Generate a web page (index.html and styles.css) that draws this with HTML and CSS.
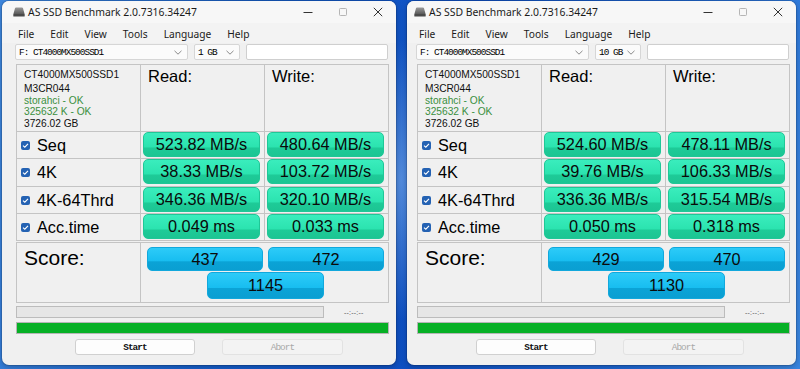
FILE: index.html
```html
<!DOCTYPE html>
<html>
<head>
<meta charset="utf-8">
<title>AS SSD Benchmark</title>
<link rel="stylesheet" href="styles.css">
</head>
<body>
<div class="desktop">

  <div class="win win-a">
    <div class="titlebar">
      <svg class="appicon" viewBox="0 0 12 10" width="12" height="10"><defs><linearGradient id="hdA" x1="0" y1="0" x2="0" y2="1"><stop offset="0" stop-color="#9a9a9a"/><stop offset="1" stop-color="#5a5a5a"/></linearGradient></defs><path d="M3 0.5 H9 Q9.8 0.5 10 1.3 L11.6 7 H0.4 L2 1.3 Q2.2 0.5 3 0.5 Z" fill="url(#hdA)"/><rect x="0.3" y="7" width="11.4" height="2.6" rx="0.6" fill="#4a4a4a"/></svg>
      <span class="title">AS SSD Benchmark 2.0.7316.34247</span>
      <div class="controls">
        <span class="ctl"><svg width="10" height="10" viewBox="0 0 10 10"><path d="M0.5 5.5 H9.5" stroke="#333" stroke-width="1"/></svg></span>
        <span class="ctl"><svg width="10" height="10" viewBox="0 0 10 10"><rect x="1.5" y="1.5" width="7" height="7" rx="0.8" fill="none" stroke="#b5b5b5" stroke-width="1"/></svg></span>
        <span class="ctl"><svg width="10" height="10" viewBox="0 0 10 10"><path d="M0.8 0.8 L9.2 9.2 M9.2 0.8 L0.8 9.2" stroke="#333" stroke-width="1"/></svg></span>
      </div>
    </div>
    <div class="menubar"><span class="mi">File</span><span class="mi">Edit</span><span class="mi">View</span><span class="mi">Tools</span><span class="mi">Language</span><span class="mi">Help</span></div>
    <div class="content">
      <div class="selectors">
        <div class="combo drive"><span>F: CT4000MX500SSD1</span><svg class="chev" width="8" height="5" viewBox="0 0 8 5"><path d="M0.5 0.8 L4 4.2 L7.5 0.8" fill="none" stroke="#8a8a8a" stroke-width="1"/></svg></div>
        <div class="combo size"><span>1 GB</span><svg class="chev" width="8" height="5" viewBox="0 0 8 5"><path d="M0.5 0.8 L4 4.2 L7.5 0.8" fill="none" stroke="#8a8a8a" stroke-width="1"/></svg></div>
        <div class="textbox"></div>
      </div>
      <div class="results">
        <div class="cell info">
          <div class="l1">CT4000MX500SSD1</div>
          <div>M3CR044</div>
          <div class="ok">storahci - OK</div>
          <div class="ok">325632 K - OK</div>
          <div>3726.02 GB</div>
        </div>
        <div class="cell head">Read:</div>
        <div class="cell head">Write:</div>

        <div class="cell label"><span class="check"><svg width="9" height="9" viewBox="0 0 9 9"><path d="M2 4.6 L3.8 6.2 L7 2.9" fill="none" stroke="#fff" stroke-width="1.1"/></svg></span>Seq</div>
        <div class="cell val"><div class="pill">523.82 MB/s</div></div>
        <div class="cell val"><div class="pill">480.64 MB/s</div></div>

        <div class="cell label"><span class="check"><svg width="9" height="9" viewBox="0 0 9 9"><path d="M2 4.6 L3.8 6.2 L7 2.9" fill="none" stroke="#fff" stroke-width="1.1"/></svg></span>4K</div>
        <div class="cell val"><div class="pill">38.33 MB/s</div></div>
        <div class="cell val"><div class="pill">103.72 MB/s</div></div>

        <div class="cell label"><span class="check"><svg width="9" height="9" viewBox="0 0 9 9"><path d="M2 4.6 L3.8 6.2 L7 2.9" fill="none" stroke="#fff" stroke-width="1.1"/></svg></span>4K-64Thrd</div>
        <div class="cell val"><div class="pill">346.36 MB/s</div></div>
        <div class="cell val"><div class="pill">320.10 MB/s</div></div>

        <div class="cell label"><span class="check"><svg width="9" height="9" viewBox="0 0 9 9"><path d="M2 4.6 L3.8 6.2 L7 2.9" fill="none" stroke="#fff" stroke-width="1.1"/></svg></span>Acc.time</div>
        <div class="cell val"><div class="pill">0.049 ms</div></div>
        <div class="cell val"><div class="pill">0.033 ms</div></div>
      </div>
      <div class="score">
        <div class="cell score-label">Score:</div>
        <div class="cell score-vals">
          <div class="srow"><div class="spill">437</div><div class="spill">472</div></div>
          <div class="srow total"><div class="spill big">1145</div></div>
        </div>
      </div>
      <div class="progress-row"><div class="progress"></div><span class="time">--:--:--</span></div>
      <div class="greenbar"></div>
      <div class="buttons"><div class="btn">Start</div><div class="btn disabled">Abort</div></div>
    </div>
  </div>

  <div class="win win-b">
    <div class="titlebar">
      <svg class="appicon" viewBox="0 0 12 10" width="12" height="10"><defs><linearGradient id="hdB" x1="0" y1="0" x2="0" y2="1"><stop offset="0" stop-color="#9a9a9a"/><stop offset="1" stop-color="#5a5a5a"/></linearGradient></defs><path d="M3 0.5 H9 Q9.8 0.5 10 1.3 L11.6 7 H0.4 L2 1.3 Q2.2 0.5 3 0.5 Z" fill="url(#hdB)"/><rect x="0.3" y="7" width="11.4" height="2.6" rx="0.6" fill="#4a4a4a"/></svg>
      <span class="title">AS SSD Benchmark 2.0.7316.34247</span>
      <div class="controls">
        <span class="ctl"><svg width="10" height="10" viewBox="0 0 10 10"><path d="M0.5 5.5 H9.5" stroke="#333" stroke-width="1"/></svg></span>
        <span class="ctl"><svg width="10" height="10" viewBox="0 0 10 10"><rect x="1.5" y="1.5" width="7" height="7" rx="0.8" fill="none" stroke="#b5b5b5" stroke-width="1"/></svg></span>
        <span class="ctl"><svg width="10" height="10" viewBox="0 0 10 10"><path d="M0.8 0.8 L9.2 9.2 M9.2 0.8 L0.8 9.2" stroke="#333" stroke-width="1"/></svg></span>
      </div>
    </div>
    <div class="menubar"><span class="mi">File</span><span class="mi">Edit</span><span class="mi">View</span><span class="mi">Tools</span><span class="mi">Language</span><span class="mi">Help</span></div>
    <div class="content">
      <div class="selectors">
        <div class="combo drive"><span>F: CT4000MX500SSD1</span><svg class="chev" width="8" height="5" viewBox="0 0 8 5"><path d="M0.5 0.8 L4 4.2 L7.5 0.8" fill="none" stroke="#8a8a8a" stroke-width="1"/></svg></div>
        <div class="combo size"><span>10 GB</span><svg class="chev" width="8" height="5" viewBox="0 0 8 5"><path d="M0.5 0.8 L4 4.2 L7.5 0.8" fill="none" stroke="#8a8a8a" stroke-width="1"/></svg></div>
        <div class="textbox"></div>
      </div>
      <div class="results">
        <div class="cell info">
          <div class="l1">CT4000MX500SSD1</div>
          <div>M3CR044</div>
          <div class="ok">storahci - OK</div>
          <div class="ok">325632 K - OK</div>
          <div>3726.02 GB</div>
        </div>
        <div class="cell head">Read:</div>
        <div class="cell head">Write:</div>

        <div class="cell label"><span class="check"><svg width="9" height="9" viewBox="0 0 9 9"><path d="M2 4.6 L3.8 6.2 L7 2.9" fill="none" stroke="#fff" stroke-width="1.1"/></svg></span>Seq</div>
        <div class="cell val"><div class="pill">524.60 MB/s</div></div>
        <div class="cell val"><div class="pill">478.11 MB/s</div></div>

        <div class="cell label"><span class="check"><svg width="9" height="9" viewBox="0 0 9 9"><path d="M2 4.6 L3.8 6.2 L7 2.9" fill="none" stroke="#fff" stroke-width="1.1"/></svg></span>4K</div>
        <div class="cell val"><div class="pill">39.76 MB/s</div></div>
        <div class="cell val"><div class="pill">106.33 MB/s</div></div>

        <div class="cell label"><span class="check"><svg width="9" height="9" viewBox="0 0 9 9"><path d="M2 4.6 L3.8 6.2 L7 2.9" fill="none" stroke="#fff" stroke-width="1.1"/></svg></span>4K-64Thrd</div>
        <div class="cell val"><div class="pill">336.36 MB/s</div></div>
        <div class="cell val"><div class="pill">315.54 MB/s</div></div>

        <div class="cell label"><span class="check"><svg width="9" height="9" viewBox="0 0 9 9"><path d="M2 4.6 L3.8 6.2 L7 2.9" fill="none" stroke="#fff" stroke-width="1.1"/></svg></span>Acc.time</div>
        <div class="cell val"><div class="pill">0.050 ms</div></div>
        <div class="cell val"><div class="pill">0.318 ms</div></div>
      </div>
      <div class="score">
        <div class="cell score-label">Score:</div>
        <div class="cell score-vals">
          <div class="srow"><div class="spill">429</div><div class="spill">470</div></div>
          <div class="srow total"><div class="spill big">1130</div></div>
        </div>
      </div>
      <div class="progress-row"><div class="progress"></div><span class="time">--:--:--</span></div>
      <div class="greenbar"></div>
      <div class="buttons"><div class="btn">Start</div><div class="btn disabled">Abort</div></div>
    </div>
  </div>

</div>
</body>
</html>
```

FILE: styles.css
```css
html, body {
  margin: 0;
  padding: 0;
}

body {
  width: 800px;
  height: 369px;
  overflow: hidden;
  background:
    radial-gradient(ellipse 60px 200px at 401px 180px, rgba(140, 190, 245, 0.55), rgba(140, 190, 245, 0) 70%),
    linear-gradient(100deg, #3f88df 0%, #165fcb 30%, #0e4fc2 55%, #1f68d4 80%, #3a86e0 100%);
}

.desktop {
  display: flex;
  gap: 11px;
  padding: 1px 0 0 2px;
  box-sizing: border-box;
  height: 369px;
}

.win {
  height: 364px;
  background: #f0f0f0;
  border-radius: 7px;
  overflow: hidden;
  box-shadow: 0 0 0 1px rgba(0, 0, 0, 0.12), 0 2px 6px rgba(0, 0, 0, 0.25);
  display: flex;
  flex-direction: column;
}

.win-a { width: 394px; --pad: 13px; }
.win-b { width: 389px; --pad: 9px; }

/* Title bar */
.titlebar {
  height: 22px;
  flex: none;
  display: flex;
  align-items: center;
  background: #f7f7f7;
  padding-left: calc(var(--pad) - 2px);
}

.appicon {
  display: block;
  flex: none;
}

.title {
  margin-left: 3px;
  font-family: "Noto Sans", "Open Sans", sans-serif;
  font-size: 10.4px;
  color: #1b1b1b;
  white-space: nowrap;
}

.controls {
  margin-left: auto;
  margin-right: 1px;
  display: flex;
}

.ctl {
  width: 35px;
  height: 22px;
  display: flex;
  align-items: center;
  justify-content: center;
}

.ctl svg { display: block; }

/* Menu */
.menubar {
  height: 20px;
  flex: none;
  display: flex;
  align-items: center;
  padding-left: calc(var(--pad) - 5px);
  padding-top: 1px;
  box-sizing: border-box;
  background: #f3f3f3;
  font-family: "Noto Sans", "Open Sans", sans-serif;
  font-size: 10.2px;
  color: #1b1b1b;
}

.mi { padding: 0 8px; }

/* Content */
.content {
  padding-left: var(--pad);
}

.selectors {
  display: flex;
  gap: 6px;
  height: 16px;
  margin-top: 1px;
}

.combo {
  box-sizing: border-box;
  height: 16px;
  background: #fbfbfb;
  border: 1px solid #d6d6d6;
  border-radius: 2px;
  display: flex;
  align-items: center;
  justify-content: space-between;
  padding: 0 5px 0 3px;
  font-family: "Liberation Mono", monospace;
  font-size: 9.4px;
  letter-spacing: -0.95px;
  color: #000;
  white-space: nowrap;
}

.combo .chev { display: block; flex: none; }

.drive { width: 173px; }
.size { width: 46px; }

.textbox {
  box-sizing: border-box;
  width: 142px;
  height: 16px;
  background: #fff;
  border: 1px solid #cfcfcf;
  border-radius: 2px;
}

/* Result grid */
.results {
  margin-top: 4px;
  margin-left: 1px;
  display: grid;
  grid-template-columns: 123px 123px 123px;
  grid-template-rows: 66px 26px 27px 26px 26px;
  gap: 1px;
  padding: 1px;
  background: #c4c4c4;
  width: max-content;
}

.cell {
  background: #f0f0f0;
  font-family: "Liberation Sans", Arial, sans-serif;
  color: #000;
}

.info {
  padding: 4px 0 0 7px;
  font-size: 10.2px;
  line-height: 11.8px;
  color: #111;
}

.info .l1 { margin-bottom: 2px; }
.info .ok { color: #3b8f3e; }

.head {
  padding: 3px 0 0 7px;
  font-size: 16.5px;
  line-height: 16px;
}

.label {
  display: flex;
  align-items: center;
  font-size: 16.3px;
  padding-left: 4px;
}

.check {
  width: 9px;
  height: 9px;
  border-radius: 2px;
  background: #2462b3;
  margin-right: 7px;
  flex: none;
  display: flex;
}

.check svg { display: block; }

.val {
  padding: 0 0 0 2px;
}

.pill {
  box-sizing: border-box;
  width: 117px;
  height: 25px;
  border-radius: 5px;
  border: 1px solid #1fc797;
  background: linear-gradient(#3aedbd 0%, #2be3af 62%, #1ecb98 64%, #1cc593 100%);
  display: flex;
  align-items: center;
  justify-content: center;
  font-size: 16.3px;
  color: #0a0a0a;
  white-space: nowrap;
}

/* Score */
.score {
  margin-top: 1px;
  margin-left: 1px;
  display: grid;
  grid-template-columns: 123px 247px;
  grid-template-rows: 59px;
  gap: 1px;
  padding: 1px;
  background: #c4c4c4;
  width: max-content;
}

.score-label {
  padding: 4px 0 0 7px;
  font-size: 21px;
  line-height: 21px;
}

.score-vals {
  padding: 4px 0 0 6px;
  display: flex;
  flex-direction: column;
  gap: 1px;
}

.srow {
  display: flex;
  gap: 5px;
}

.srow.total { padding-left: 60px; }

.spill {
  box-sizing: border-box;
  width: 116px;
  height: 24px;
  border-radius: 5px;
  border: 1px solid #12a8dc;
  background: linear-gradient(#2dcbf8 0%, #17bdf0 60%, #0ba3d6 62%, #0a9fd2 100%);
  display: flex;
  align-items: center;
  justify-content: center;
  font-size: 16.3px;
  color: #0a0a0a;
}

.spill.big {
  width: 117px;
  height: 27px;
}

/* Progress */
.progress-row {
  margin-top: 3px;
  margin-left: 1px;
  display: flex;
  align-items: center;
  height: 12px;
}

.progress {
  box-sizing: border-box;
  width: 308px;
  height: 12px;
  background: #e6e6e6;
  border: 1px solid #bcbcbc;
}

.time {
  margin-left: 20px;
  font-family: "Liberation Sans", Arial, sans-serif;
  font-size: 7px;
  color: #555;
  letter-spacing: 0.2px;
}

.greenbar {
  box-sizing: border-box;
  margin-top: 4px;
  margin-left: 1px;
  width: 373px;
  height: 12px;
  background: #06b025;
  border: 1px solid #b5b5b5;
}

.buttons {
  margin-top: 5px;
  margin-left: 60px;
  display: flex;
  gap: 27px;
}

.btn {
  box-sizing: border-box;
  width: 120px;
  height: 16px;
  background: #fdfdfd;
  border: 1px solid #d0d0d0;
  border-radius: 3px;
  display: flex;
  align-items: center;
  justify-content: center;
  font-family: "Liberation Mono", monospace;
  font-size: 9.4px;
  font-weight: bold;
  letter-spacing: -0.9px;
  color: #111;
}

.btn.disabled {
  width: 121px;
  background: #f3f3f3;
  border-color: #e2e2e2;
  color: #a8a8a8;
  font-weight: normal;
}
```
